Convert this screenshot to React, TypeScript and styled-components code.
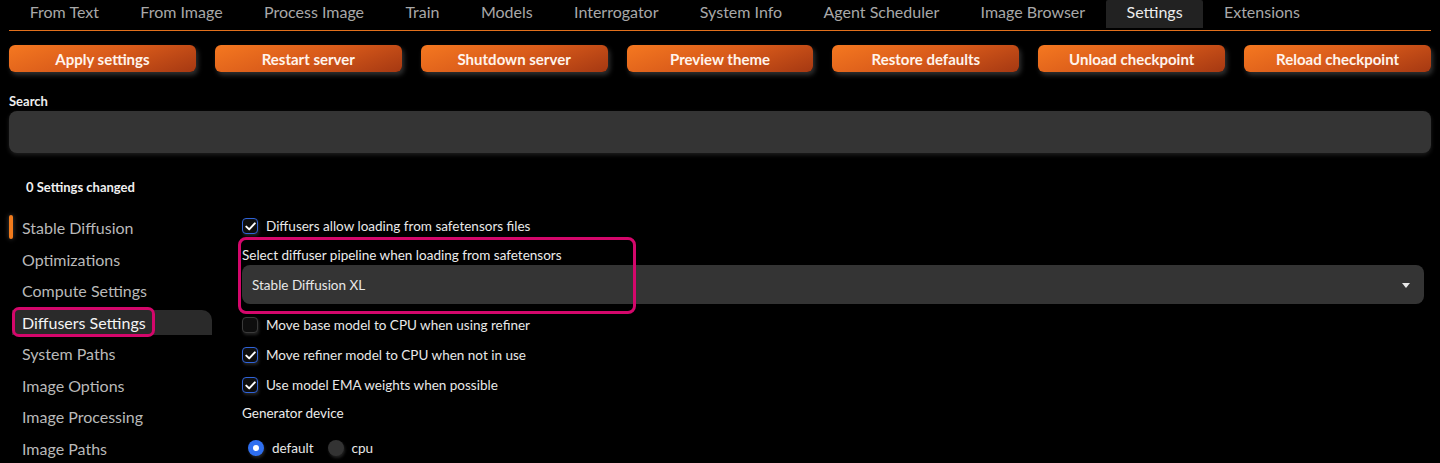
import React from "react";
import styled, { createGlobalStyle, css } from "styled-components";

const Global = createGlobalStyle`
  html, body { margin: 0; padding: 0; background: #000; }
  body { font-family: Lato, "Noto Sans", sans-serif; color: #e6e6e6; overflow: hidden; }
  * { box-sizing: border-box; }
`;

const Page = styled.div`
  width: 1440px;
  height: 463px;
  padding: 0 9px;
  overflow: hidden;
`;

const TabBar = styled.div`
  display: flex;
  height: 31px;
  border-bottom: 1px solid #e2701c;
`;

const Tab = styled.div<{ $active?: boolean }>`
  height: 28px;
  padding: 0 20.7px 5px;
  display: flex;
  align-items: center;
  font-size: 16px;
  color: ${(p) => (p.$active ? "#ececec" : "#a8a8a8")};
  background: ${(p) => (p.$active ? "#222" : "transparent")};
  border-radius: 2px 2px 0 0;
`;

const ButtonRow = styled.div`
  display: grid;
  grid-template-columns: repeat(7, 1fr);
  column-gap: 19px;
  margin-top: 14px;
`;

const ActionButton = styled.div`
  height: 27px;
  border-radius: 6px;
  background: linear-gradient(160deg, #f57820 0%, #d85a1a 50%, #a53812 100%);
  box-shadow: 2px 3px 5px rgba(90, 90, 90, 0.55);
  color: #fff4ec;
  font-size: 15px;
  font-weight: 700;
  display: flex;
  align-items: center;
  justify-content: center;
`;

const SearchLabel = styled.div`
  margin-top: 21px;
  font-size: 13px;
  font-weight: 700;
  color: #eee;
  height: 17px;
  line-height: 17px;
`;

const SearchBox = styled.div`
  margin-top: 1px;
  height: 42px;
  background: #343434;
  border-radius: 8px;
  box-shadow: 0 2px 4px rgba(60, 60, 60, 0.5);
`;

const ChangedNote = styled.div`
  margin: 26px 0 0 17px;
  font-size: 13px;
  font-weight: 700;
  color: #f0f0f0;
  height: 16px;
  line-height: 16px;
`;

const Main = styled.div`
  position: relative;
  display: flex;
  margin-top: 16px;
`;

const Sidebar = styled.div`
  width: 203px;
  flex: none;
  display: flex;
  flex-direction: column;
  padding-top: 4px;
`;

const SideItem = styled.div<{ $current?: boolean; $selected?: boolean }>`
  position: relative;
  height: 25px;
  margin-bottom: 6.5px;
  padding-left: 13px;
  display: flex;
  align-items: center;
  font-size: 16px;
  color: ${(p) => (p.$selected ? "#f4f4f4" : "#b9b9b9")};
  ${(p) =>
    p.$selected &&
    css`
      background: #2a2a2a;
      margin-left: 3px;
      padding-left: 10px;
      border-radius: 0 10px 0 0;
    `}
  ${(p) =>
    p.$current &&
    css`
      &::before {
        content: "";
        position: absolute;
        left: 0;
        top: 0;
        width: 4px;
        height: 24px;
        border-radius: 2px;
        background: #f07a1c;
        box-shadow: 0 0 5px rgba(200, 200, 200, 0.35);
      }
    `}
`;

const Content = styled.div`
  flex: 1;
  padding-left: 30px;
  padding-right: 7px;
  display: flex;
  flex-direction: column;
`;

const CheckRow = styled.div`
  display: flex;
  align-items: center;
  height: 30px;
  gap: 8px;
  font-size: 13.5px;
  color: #e8e8e8;
`;

const Box = styled.div<{ $checked?: boolean }>`
  width: 16px;
  height: 16px;
  border-radius: 4px;
  flex: none;
  background: #0e0e0e;
  border: 1.5px solid ${(p) => (p.$checked ? "#2f63d8" : "#3a3a3a")};
  box-shadow: 1px 2px 3px rgba(70, 70, 70, 0.5);
  display: flex;
  align-items: center;
  justify-content: center;
`;

const FieldLabel = styled.div`
  margin-top: 5px;
  font-size: 13.5px;
  color: #ececec;
  height: 18px;
  line-height: 18px;
`;

const Dropdown = styled.div`
  margin-top: 1px;
  height: 39px;
  background: #343434;
  border-radius: 8px;
  display: flex;
  align-items: center;
  justify-content: space-between;
  padding: 0 14px 0 10px;
  font-size: 13.5px;
  color: #e8e8e8;
  margin-bottom: 6px;
`;

const Caret = styled.div`
  width: 0;
  height: 0;
  border-left: 4.5px solid transparent;
  border-right: 4.5px solid transparent;
  border-top: 5px solid #e8e8e8;
  margin-top: 2px;
`;

const GroupLabel = styled.div`
  margin-top: 3px;
  font-size: 13.5px;
  color: #ececec;
  height: 20px;
  line-height: 20px;
`;

const RadioRow = styled.div`
  display: flex;
  align-items: center;
  gap: 8px;
  margin-top: 17px;
  padding-left: 6px;
  font-size: 13.5px;
  color: #e8e8e8;
`;

const Radio = styled.div<{ $on?: boolean }>`
  width: 16px;
  height: 16px;
  border-radius: 50%;
  flex: none;
  background: ${(p) => (p.$on ? "#2f6ff0" : "#333")};
  box-shadow: 1px 2px 3px rgba(70, 70, 70, 0.5);
  display: flex;
  align-items: center;
  justify-content: center;
  &::after {
    content: "";
    width: 6px;
    height: 6px;
    border-radius: 50%;
    background: ${(p) => (p.$on ? "#fff" : "transparent")};
  }
`;

const RadioText = styled.span`
  margin-right: 6px;
`;

const Highlight = styled.div`
  position: absolute;
  border: 3.5px solid #d4076b;
  pointer-events: none;
`;

const Check = () => (
  <svg width="11" height="9" viewBox="0 0 11 9">
    <path d="M1.3 4.6 L4.2 7.4 L9.8 1.4" fill="none" stroke="#fff" strokeWidth="2" strokeLinecap="round" strokeLinejoin="round" />
  </svg>
);

const tabs = [
  "From Text",
  "From Image",
  "Process Image",
  "Train",
  "Models",
  "Interrogator",
  "System Info",
  "Agent Scheduler",
  "Image Browser",
  "Settings",
  "Extensions",
];

const buttons = [
  "Apply settings",
  "Restart server",
  "Shutdown server",
  "Preview theme",
  "Restore defaults",
  "Unload checkpoint",
  "Reload checkpoint",
];

const sections = [
  "Stable Diffusion",
  "Optimizations",
  "Compute Settings",
  "Diffusers Settings",
  "System Paths",
  "Image Options",
  "Image Processing",
  "Image Paths",
];

export default function App() {
  return (
    <>
      <Global />
      <Page>
        <TabBar>
          {tabs.map((t) => (
            <Tab key={t} $active={t === "Settings"}>
              {t}
            </Tab>
          ))}
        </TabBar>
        <ButtonRow>
          {buttons.map((b) => (
            <ActionButton key={b}>{b}</ActionButton>
          ))}
        </ButtonRow>
        <SearchLabel>Search</SearchLabel>
        <SearchBox />
        <ChangedNote>0 Settings changed</ChangedNote>
        <Main>
          <Sidebar>
            {sections.map((s, i) => (
              <SideItem key={s} $current={i === 0} $selected={s === "Diffusers Settings"}>
                {s}
              </SideItem>
            ))}
          </Sidebar>
          <Content>
            <CheckRow>
              <Box $checked>
                <Check />
              </Box>
              Diffusers allow loading from safetensors files
            </CheckRow>
            <FieldLabel>Select diffuser pipeline when loading from safetensors</FieldLabel>
            <Dropdown>
              <span>Stable Diffusion XL</span>
              <Caret />
            </Dropdown>
            <CheckRow>
              <Box />
              Move base model to CPU when using refiner
            </CheckRow>
            <CheckRow>
              <Box $checked>
                <Check />
              </Box>
              Move refiner model to CPU when not in use
            </CheckRow>
            <CheckRow>
              <Box $checked>
                <Check />
              </Box>
              Use model EMA weights when possible
            </CheckRow>
            <GroupLabel>Generator device</GroupLabel>
            <RadioRow>
              <Radio $on />
              <RadioText>default</RadioText>
              <Radio />
              <RadioText>cpu</RadioText>
            </RadioRow>
          </Content>
          <Highlight style={{ left: 229, top: 26, width: 398, height: 77, borderRadius: 8 }} />
          <Highlight style={{ left: 3, top: 96, width: 143, height: 30, borderRadius: 7 }} />
        </Main>
      </Page>
    </>
  );
}
